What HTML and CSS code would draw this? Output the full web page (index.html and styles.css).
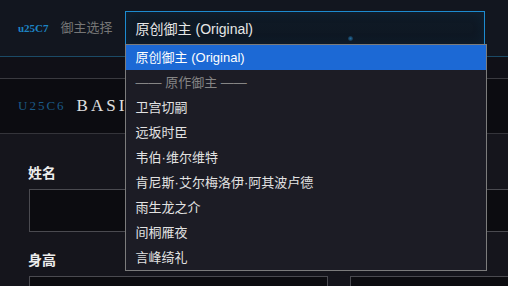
FILE: index.html
```html
<!DOCTYPE html>
<html lang="zh">
<head>
<meta charset="utf-8">
<link rel="stylesheet" href="styles.css">
</head>
<body>
<div class="page">
  <header class="header">
    <span class="code">u25C7</span>
    <span class="hlabel">御主选择</span>
    <div class="select">
      <span class="select-text">原创御主 (Original)</span>
      <span class="glow"></span>
      <ul class="dropdown">
        <li class="opt selected">原创御主 (Original)</li>
        <li class="opt group">—— 原作御主 ——</li>
        <li class="opt">卫宫切嗣</li>
        <li class="opt">远坂时臣</li>
        <li class="opt">韦伯·维尔维特</li>
        <li class="opt">肯尼斯·艾尔梅洛伊·阿其波卢德</li>
        <li class="opt">雨生龙之介</li>
        <li class="opt">间桐雁夜</li>
        <li class="opt">言峰绮礼</li>
      </ul>
    </div>
  </header>
  <div class="strip"></div>
  <div class="section-title">
    <span class="sec-code">U25C6</span>
    <span class="sec-name">BASIC INFORMATION</span>
  </div>
  <main class="form">
    <div class="field full">
      <label class="label">姓名</label>
      <div class="input"></div>
    </div>
    <div class="row">
      <div class="field">
        <label class="label">身高</label>
        <div class="input"></div>
      </div>
      <div class="field">
        <label class="label">体重</label>
        <div class="input"></div>
      </div>
    </div>
  </main>
</div>
</body>
</html>
```
FILE: styles.css
```css
html, body {
  margin: 0;
  padding: 0;
  background: #15151c;
  overflow: hidden;
  height: 100%;
}
.page {
  font-family: "Liberation Sans", "Noto Sans CJK SC", sans-serif;
  width: 700px;
}
.header {
  height: 57px;
  box-sizing: border-box;
  background: #12161f;
  border-bottom: 1px solid #1b4a66;
  display: flex;
  align-items: flex-start;
  padding-left: 18px;
  padding-top: 11px;
}
.code {
  font-family: "Liberation Serif", serif;
  font-size: 11px;
  font-weight: bold;
  color: #1d84c4;
  line-height: 34px;
}
.hlabel {
  color: #767676;
  font-size: 13px;
  line-height: 34px;
  margin-left: 12px;
  margin-right: 12px;
}
.select {
  position: relative;
  width: 360px;
  height: 34px;
  box-sizing: border-box;
  border: 1px solid #1d8bd0;
  background: linear-gradient(180deg, #0f1a26, #0e1722);
  box-shadow: inset 0 0 12px rgba(20, 90, 140, 0.15);
  display: flex;
  align-items: center;
  padding-left: 10px;
}
.select-text {
  color: #e6e6e6;
  font-size: 14px;
}
.glow {
  position: absolute;
  left: 222px;
  top: 24px;
  width: 5px;
  height: 5px;
  border-radius: 50%;
  background: radial-gradient(circle, rgba(40,130,190,0.8), rgba(40,130,190,0));
}
.dropdown {
  position: absolute;
  left: -1px;
  top: 32px;
  width: 360px;
  margin: 0;
  padding: 0;
  list-style: none;
  background: #1c1c25;
  border: 1px solid #7c7c7c;
  z-index: 10;
}
.opt {
  height: 25px;
  line-height: 26px;
  padding-left: 10px;
  color: #e2e2e2;
  font-size: 13px;
  white-space: nowrap;
}
.opt.selected {
  background: #1c69d5;
  color: #ffffff;
}
.opt.group {
  color: #858585;
}
.strip {
  height: 21px;
  background: #101017;
  border-bottom: 1px solid #3a3a40;
}
.section-title {
  height: 54px;
  background: #0c0c11;
  border-bottom: 1px solid #34343a;
  display: flex;
  align-items: center;
  padding-left: 18px;
  font-family: "Liberation Serif", serif;
}
.sec-code {
  color: #1b5a86;
  font-size: 13px;
  letter-spacing: 2px;
  margin-right: 11px;
}
.sec-name {
  color: #e0e0e0;
  font-size: 17px;
  letter-spacing: 3px;
}
.form {
  padding: 29px 29px 0 29px;
  width: 620px;
}
.row {
  display: grid;
  grid-template-columns: 299px 299px;
  column-gap: 22px;
}
.field {
  display: flex;
  flex-direction: column;
}
.full {
  margin-bottom: 18px;
}
.label {
  color: #ececec;
  font-size: 14px;
  font-weight: bold;
  line-height: 20px;
  margin-left: -1px;
  margin-bottom: 6px;
}
.input {
  height: 43px;
  box-sizing: border-box;
  border: 1px solid #4a4a50;
  background: #0c0c10;
}
```
